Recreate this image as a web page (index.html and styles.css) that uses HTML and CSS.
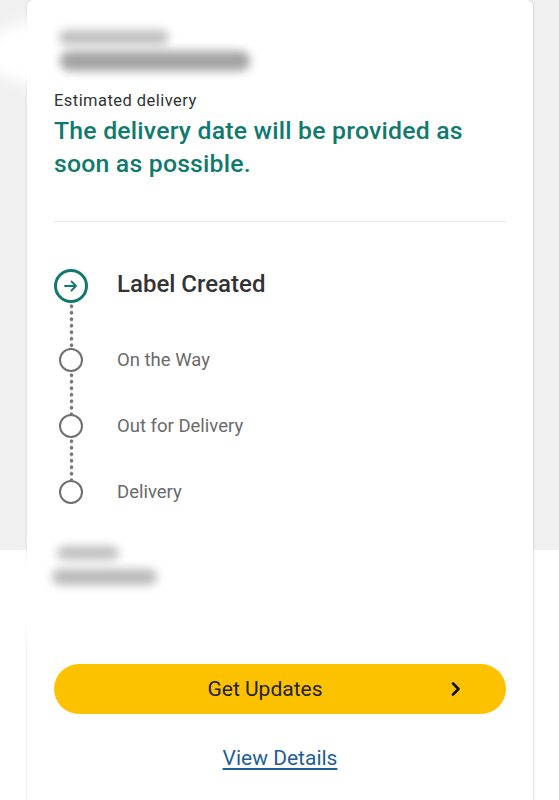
FILE: index.html
```html
<!DOCTYPE html>
<html lang="en">
<head>
<meta charset="utf-8">
<title>Tracking</title>
<link rel="stylesheet" href="styles.css">
</head>
<body>
<div class="page">
  <div class="card">
    <div class="smudge smudge-top"></div>
    <div class="blur-head">
      <div class="blur-bar bar-a"></div>
      <div class="blur-bar bar-b"></div>
    </div>
    <p class="est-label">Estimated delivery</p>
    <h1 class="est-value">The delivery date will be provided as soon as possible.</h1>
    <hr class="divider">
    <ol class="timeline">
      <li class="step step-current">
        <div class="rail">
          <span class="dot-current">
            <svg width="14" height="12" viewBox="0 0 14 12"><path d="M1 6h11M7.5 1.5L12 6l-4.5 4.5" fill="none" stroke="#11796d" stroke-width="1.8" stroke-linecap="round" stroke-linejoin="round"/></svg>
          </span>
          <span class="line"></span>
        </div>
        <span class="step-label label-current">Label Created</span>
      </li>
      <li class="step">
        <div class="rail">
          <span class="dot"></span>
          <span class="line"></span>
        </div>
        <span class="step-label">On the Way</span>
      </li>
      <li class="step">
        <div class="rail">
          <span class="dot"></span>
          <span class="line"></span>
        </div>
        <span class="step-label">Out for Delivery</span>
      </li>
      <li class="step step-last">
        <div class="rail">
          <span class="dot"></span>
        </div>
        <span class="step-label">Delivery</span>
      </li>
    </ol>
    <div class="smudge smudge-bottom"></div>
    <div class="blur-foot">
      <div class="blur-bar bar-c"></div>
      <div class="blur-bar bar-d"></div>
    </div>
    <button class="btn-updates" type="button">
      <span>Get Updates</span>
      <svg class="chev" width="12" height="16" viewBox="0 0 12 16"><path d="M3 2.5l5.5 5.5L3 13.5" fill="none" stroke="#111" stroke-width="2.6" stroke-linecap="round" stroke-linejoin="round"/></svg>
    </button>
    <div class="details-wrap"><a class="details" href="#">View Details</a></div>
  </div>
</div>
</body>
</html>
```

FILE: styles.css
```css
* { box-sizing: border-box; }
html, body { margin: 0; padding: 0; }
body {
  font-family: Roboto, "Noto Sans", Arial, sans-serif;
  background: linear-gradient(#f0f0f0 0, #f0f0f0 550px, #ffffff 550px);
  min-height: 800px;
  overflow: hidden;
}
.page {
  padding: 0 26px 0 27px;
}
.card {
  position: relative;
  background: #fff;
  border-radius: 6px 6px 0 0;
  box-shadow: 0 0 3px rgba(0,0,0,0.12), 1px 0 2px rgba(0,0,0,0.06);
  padding: 0 27px 40px 27px;
  min-height: 820px;
}
.blur-head {
  position: relative;
  height: 91px;
  padding-top: 30px;
  display: flex;
  flex-direction: column;
  gap: 6px;
}
.blur-bar {
  background: #8c8c8c;
  border-radius: 9px;
  filter: blur(5px);
}
.bar-a { width: 110px; height: 15px; margin-left: 5px; opacity: 0.55; }
.bar-b { width: 190px; height: 20px; margin-left: 6px; opacity: 0.8; }
.smudge {
  position: absolute;
  background: #fff;
  border-radius: 50%;
  filter: blur(8px);
  pointer-events: none;
}
.smudge-top { left: -45px; top: 8px; width: 300px; height: 90px; }
.smudge-bottom { left: -24px; top: 548px; width: 120px; height: 95px; }
.est-label {
  position: relative;
  margin: 0;
  font-size: 16.5px;
  line-height: 20px;
  letter-spacing: 0.45px;
  color: #333;
}
.est-value {
  margin: 3px 0 0;
  font-size: 24.8px;
  line-height: 33px;
  font-weight: 500;
  color: #107a6e;
  letter-spacing: 0.2px;
}
.divider {
  border: 0;
  border-top: 1px solid #e4e4e4;
  margin: 41px 0 0;
}
.timeline {
  list-style: none;
  margin: 47px 0 0;
  padding: 0;
}
.step {
  display: flex;
  align-items: flex-start;
  gap: 29px;
  height: 66px;
}
.step-current { height: 79px; }
.step-last { height: 24px; }
.rail {
  width: 34px;
  height: 100%;
  display: flex;
  flex-direction: column;
  align-items: center;
  flex-shrink: 0;
}
.dot-current {
  width: 34px;
  height: 34px;
  border: 3px solid #11796d;
  border-radius: 50%;
  display: flex;
  align-items: center;
  justify-content: center;
  flex-shrink: 0;
}
.dot {
  width: 24px;
  height: 24px;
  border: 2.5px solid #707070;
  border-radius: 50%;
  flex-shrink: 0;
}
.line {
  flex: 1;
  width: 5px;
  background-image: radial-gradient(circle, #777 1.6px, transparent 2.2px);
  background-size: 5px 6.5px;
  background-repeat: repeat-y;
  background-position: 0 0;
}
.step-label {
  font-size: 18.5px;
  line-height: 26px;
  color: #6a6a6a;
  margin-top: -1px;
}
.label-current {
  font-size: 24px;
  line-height: 34px;
  font-weight: 500;
  color: #333;
  margin-top: -2px;
}
.blur-foot {
  position: relative;
  height: 160px;
  padding-top: 42px;
  display: flex;
  flex-direction: column;
  gap: 9px;
}
.bar-c { width: 62px; height: 14px; margin-left: 3px; opacity: 0.55; }
.bar-d { width: 105px; height: 16px; margin-left: -2px; opacity: 0.6; }
.btn-updates {
  width: 100%;
  height: 50px;
  border: 0;
  border-radius: 25px;
  background: #fcc200;
  position: relative;
  display: flex;
  align-items: center;
  justify-content: center;
  font-family: inherit;
  font-size: 21px;
  color: #222;
  padding: 0 30px 0 0;
}
.chev {
  position: absolute;
  right: 44px;
  top: 17px;
}
.details-wrap {
  text-align: center;
  margin-top: 32px;
}
.details {
  font-size: 21px;
  color: #1e5e9a;
  text-decoration: underline;
  text-underline-offset: 3px;
}
```
